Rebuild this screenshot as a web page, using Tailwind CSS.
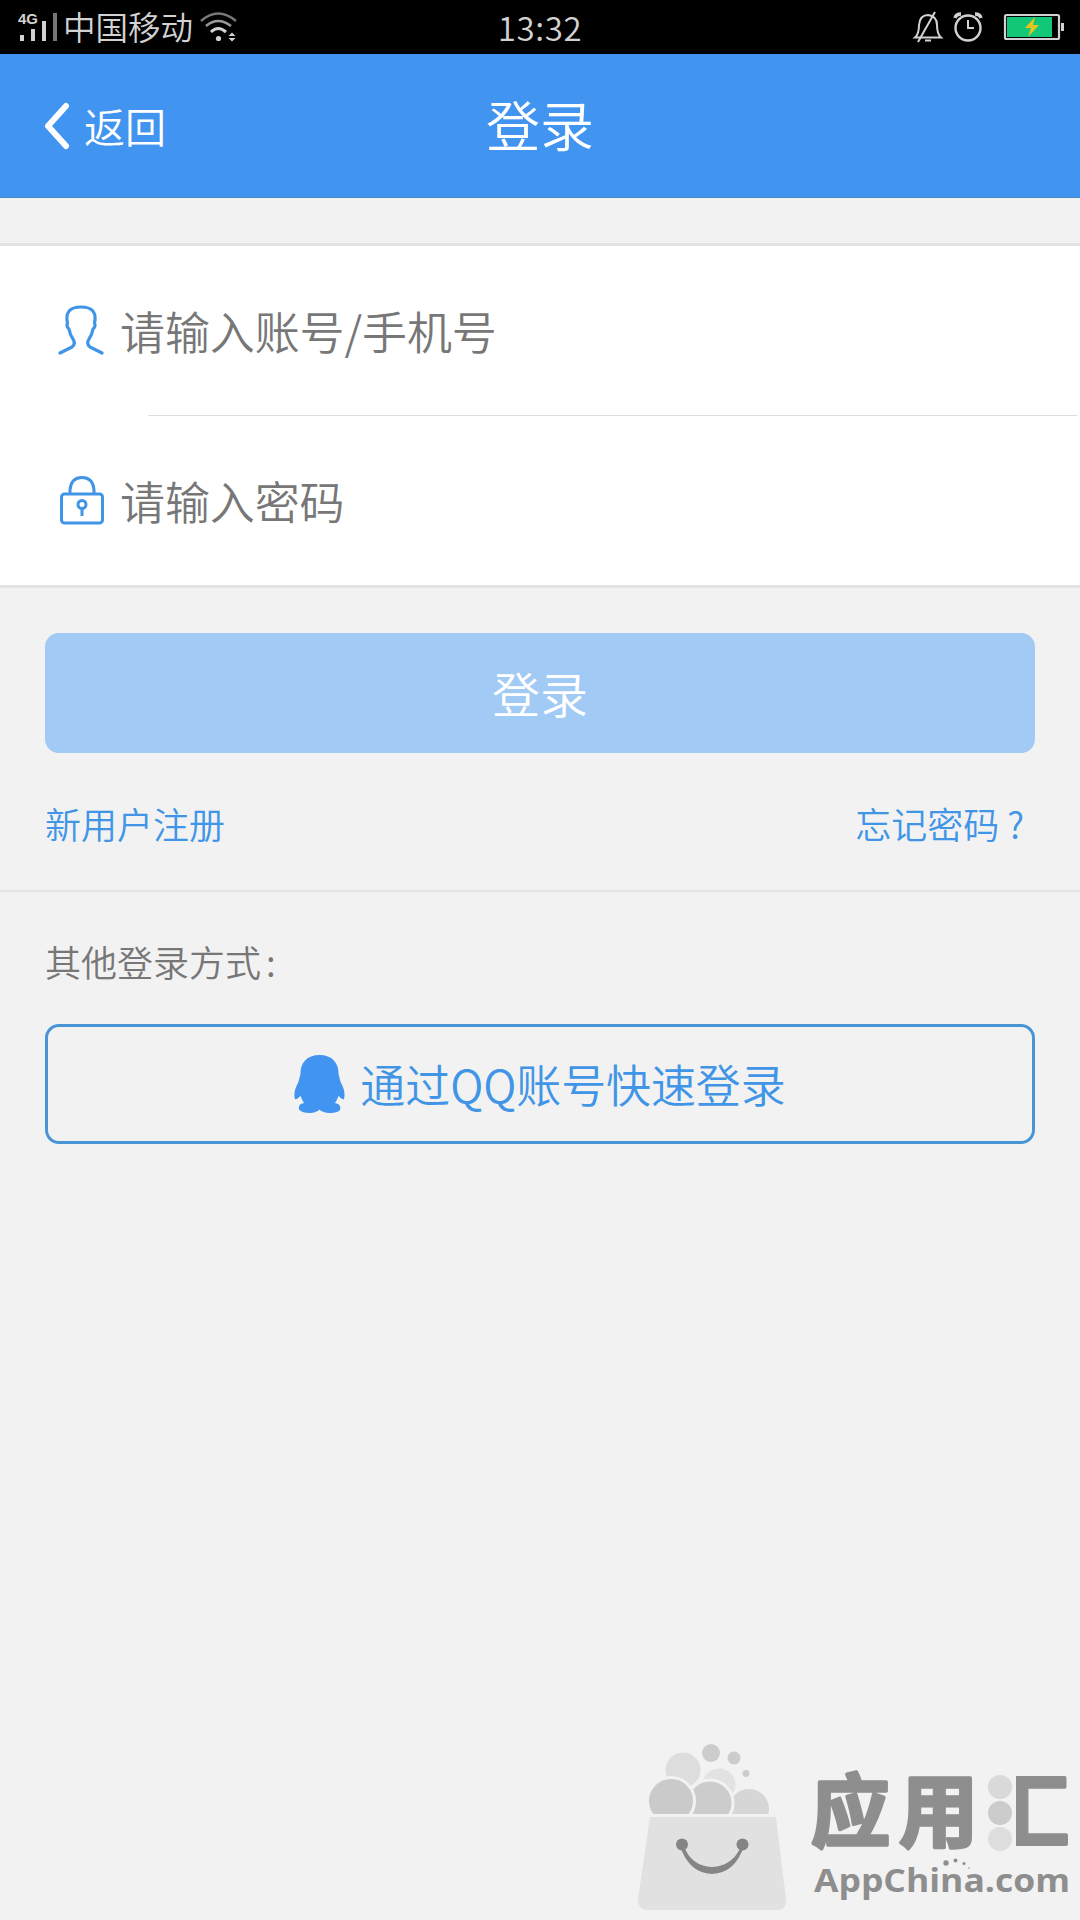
<!DOCTYPE html>
<html lang="zh-CN">
<head>
  <meta charset="UTF-8" />
  <meta name="viewport" content="width=device-width, initial-scale=1" />
  <title>登录</title>
  <script src="https://cdn.jsdelivr.net/npm/@tailwindcss/browser@4"></script>
</head>
<body class="relative flex h-[1920px] w-[1080px] flex-col overflow-hidden bg-[#f2f2f2] font-['Noto_Sans_CJK_SC',sans-serif] font-[350]">

  <!-- Status bar -->
  <div class="grid h-[54px] grid-cols-[1fr_auto_1fr] items-center bg-black text-[#d2d2d2]">
    <div class="flex items-center pl-[18px]">
      <svg class="h-[54px] w-[42px]" viewBox="18 0 42 54" fill="currentColor">
        <text x="18" y="24" font-family="Liberation Sans" font-weight="bold" font-size="15" textLength="20" lengthAdjust="spacingAndGlyphs">4G</text>
        <path d="M20 35h4v6h-4zM31 29h4v12h-4zM42 21h4v20h-4z" />
        <path d="M53 13h4v28h-4z" fill="#777" />
      </svg>
      <span class="ml-[3px] text-[32.500px] leading-[52px] pb-[2px]">中国移动</span>
      <svg class="ml-[6px] h-[54px] w-[40px]" viewBox="199 0 40 54" fill="none" stroke="currentColor" stroke-width="2.6">
        <path d="M201 21Q218 6 236 21" stroke="#777" />
        <path d="M206 26Q218 16 231 26" stroke="#999" />
        <path d="M211 32Q218 25 226 32" stroke-width="3" />
        <circle cx="218.500" cy="38.500" r="2.600" fill="currentColor" stroke="none" />
        <path d="M228.500 36l3.500-3.500 3.500 3.500zM228.500 38l3.500 3.500 3.500-3.500z" fill="currentColor" stroke="none" />
      </svg>
    </div>
    <span class="text-[33px] leading-[54px] tracking-[0.600px]">13:32</span>
    <div class="flex items-center justify-end pr-[14px]">
      <svg class="h-[54px] w-[154px]" viewBox="912 0 154 54" fill="none" stroke="currentColor" stroke-width="2">
        <path d="M915 37.500Q919 34 919 25Q920 15 928 15Q937 16 937 25Q937 34 941 37.500Z" />
        <path d="M935 12L918 42" />
        <path d="M925 40.500h6" />
        <circle cx="968" cy="28" r="12.500" stroke-width="2.400" />
        <path d="M968 20v8h6" />
        <path d="M955 18q1-4 6-4M981 18q-1-4-6-4" stroke-width="3.500" />
        <rect x="1005" y="15" width="54" height="24" rx="1.500" stroke-width="2.200" />
        <rect x="1007" y="17" width="45" height="20" fill="#12c778" stroke="none" />
        <path d="M1061 23h3v8h-3z" fill="currentColor" stroke="none" />
        <path d="M1035 17L1025 28h6l-3 9 11-12h-6z" fill="#e8c51c" stroke="none" />
      </svg>
    </div>
  </div>

  <!-- Title bar -->
  <header class="grid h-[144px] grid-cols-[1fr_auto_1fr] items-center border-b border-[#4a88c8] bg-[#4195f0] text-white">
    <a class="flex items-center pl-[44px]">
      <svg class="h-[48px] w-[26px]" viewBox="44 101 26 48" fill="none" stroke="currentColor" stroke-width="6">
        <path d="M66 105L48 125L66 145" stroke-linecap="round" stroke-linejoin="round" />
      </svg>
      <span class="ml-[14px] text-[41px] leading-[60px] pb-[1px]">返回</span>
    </a>
    <h1 class="pb-[3px] text-[54px] leading-[80px] font-[350]">登录</h1>
  </header>

  <!-- Login form -->
  <form class="mt-[45px] border-y-[3px] border-[#e2e2e2] bg-white text-[45px] text-[#777]">
    <label class="flex h-[169px] items-center pl-[58px]">
      <svg class="h-[52px] w-[46px]" viewBox="0 0 46 52" fill="none" stroke="#4195e6" stroke-width="3.2" stroke-linecap="round" stroke-linejoin="round">
        <path d="M2 48L14 42Q18 39 15 34Q12 30 11 24Q8 22 9.500 18Q6 2 23 2Q40 2 36.500 18Q38 22 35 24Q34 30 31 34Q28 39 32 42L44 48" />
      </svg>
      <span class="ml-[16px] tracking-[-0.100px]">请输入账号/手机号</span>
    </label>
    <div class="ml-[148px] mr-[3px] border-t border-[#ddd]"></div>
    <label class="flex h-[169px] items-center pl-[58px]">
      <svg class="h-[52px] w-[46px]" viewBox="0 0 46 52" fill="none" stroke="#4195e6" stroke-width="3">
        <rect x="3.500" y="19" width="41" height="29" rx="3" />
        <path d="M12 19V15Q13 2.500 24 2.500Q35 2.500 36 15V19" />
        <circle cx="24" cy="29.500" r="4" />
        <path d="M24 33v8" />
      </svg>
      <span class="ml-[16px] tracking-[-0.100px]">请输入密码</span>
    </label>
  </form>

  <button class="mx-[45px] mt-[45px] h-[120px] rounded-[14px] bg-[#a1caf5] pb-[3px] text-[48px] font-[350] text-white">登录</button>

  <div class="flex h-[139px] items-center justify-between border-b-2 border-[#e5e5e5] pr-[56px] pl-[45px] pt-[2px] text-[36px] text-[#4195e6]">
    <a>新用户注册</a>
    <a class="flex gap-[8px]"><span>忘记密码</span><span>?</span></a>
  </div>

  <p class="mt-[42px] flex gap-[5px] pl-[45px] text-[36px] leading-[54px] text-[#777]"><span>其他登录方式</span><span>:</span></p>

  <button class="mx-[45px] mt-[36px] flex h-[120px] items-center justify-center rounded-[14px] border-[3px] border-[#4a95d6] text-[45px] font-[350] text-[#4195e6]">
    <svg class="h-[60px] w-[51px]" viewBox="0 0 51 60" fill="#4195f0">
      <path d="M25.500 1C13 1 6 9 6.500 20C5.500 23 5.500 25 4 29C0 36 0 42 1 45C3 46 5 43 6.500 42Q8 46 10 49C5 50 4 53 5.500 56C9 60 22 60 25.500 55.500C29 60 43 60 46 56C47 53 46 50 41 49Q43 46 44.500 42C46 43 48 46 50 45C51 42 51 36 47 29C45.500 25 45.500 23 44.500 20C45 9 38 1 25.500 1Z" />
    </svg>
    <span class="ml-[15px] tracking-[-0.100px]">通过QQ账号快速登录</span>
  </button>

  <!-- Store badge -->
  <svg class="absolute right-0 bottom-0 h-[190px] w-[460px]" viewBox="620 1730 460 190">
    <g stroke="#f2f2f2" stroke-width="3">
      <circle cx="683" cy="1770" r="19" fill="#ddd" />
      <circle cx="719" cy="1785" r="18" fill="#e2e2e2" />
      <circle cx="749" cy="1809" r="21.500" fill="#d6d6d6" />
      <circle cx="710" cy="1803" r="23" fill="#ccc" />
      <circle cx="671" cy="1801" r="23.500" fill="#cacaca" />
    </g>
    <g fill="#ccc">
      <circle cx="711" cy="1753" r="9" />
      <circle cx="734" cy="1758" r="6.500" />
      <circle cx="746" cy="1773.500" r="3.500" />
    </g>
    <path d="M645 1814H780V1818H645Z" fill="#f2f2f2" />
    <path d="M650 1817H776L786 1899Q787 1910 777 1910H648Q638 1910 638 1899Z" fill="#e1e1e1" />
    <g fill="#858585">
      <circle cx="682" cy="1844.500" r="6" />
      <circle cx="742.500" cy="1844.500" r="6" />
      <path d="M680 1846Q689 1873 712 1874Q735 1873 744 1846L741 1846Q733 1866 712 1867Q691 1866 684 1846Z" />
    </g>
    <g fill="#8e8e8e" stroke="#8e8e8e" stroke-width="3.5" stroke-linejoin="round" font-family="Noto Sans CJK SC" font-weight="700">
      <text x="811" y="1841" font-size="79">应</text>
      <text x="899" y="1841" font-size="79">用</text>
      <text x="990" y="1841" font-size="79">汇</text>
    </g>
    <path d="M985 1766H1016V1856H985Z" fill="#f2f2f2" />
    <circle cx="1000" cy="1787" r="12" fill="#d9d9d9" />
    <circle cx="1000" cy="1813" r="12" fill="#ccc" />
    <circle cx="1000" cy="1839" r="12" fill="#ddd" />
    <text x="814" y="1892" font-family="Open Sans" font-weight="bold" font-size="33" textLength="256" lengthAdjust="spacingAndGlyphs" fill="#8e8e8e">AppChina.com</text>
    <g fill="#8e8e8e">
      <circle cx="946" cy="1863" r="2.700" />
      <circle cx="955.500" cy="1860.500" r="2" />
      <circle cx="964" cy="1863.500" r="1.500" />
      <circle cx="969" cy="1868" r="0.800" />
    </g>
  </svg>
</body>
</html>
